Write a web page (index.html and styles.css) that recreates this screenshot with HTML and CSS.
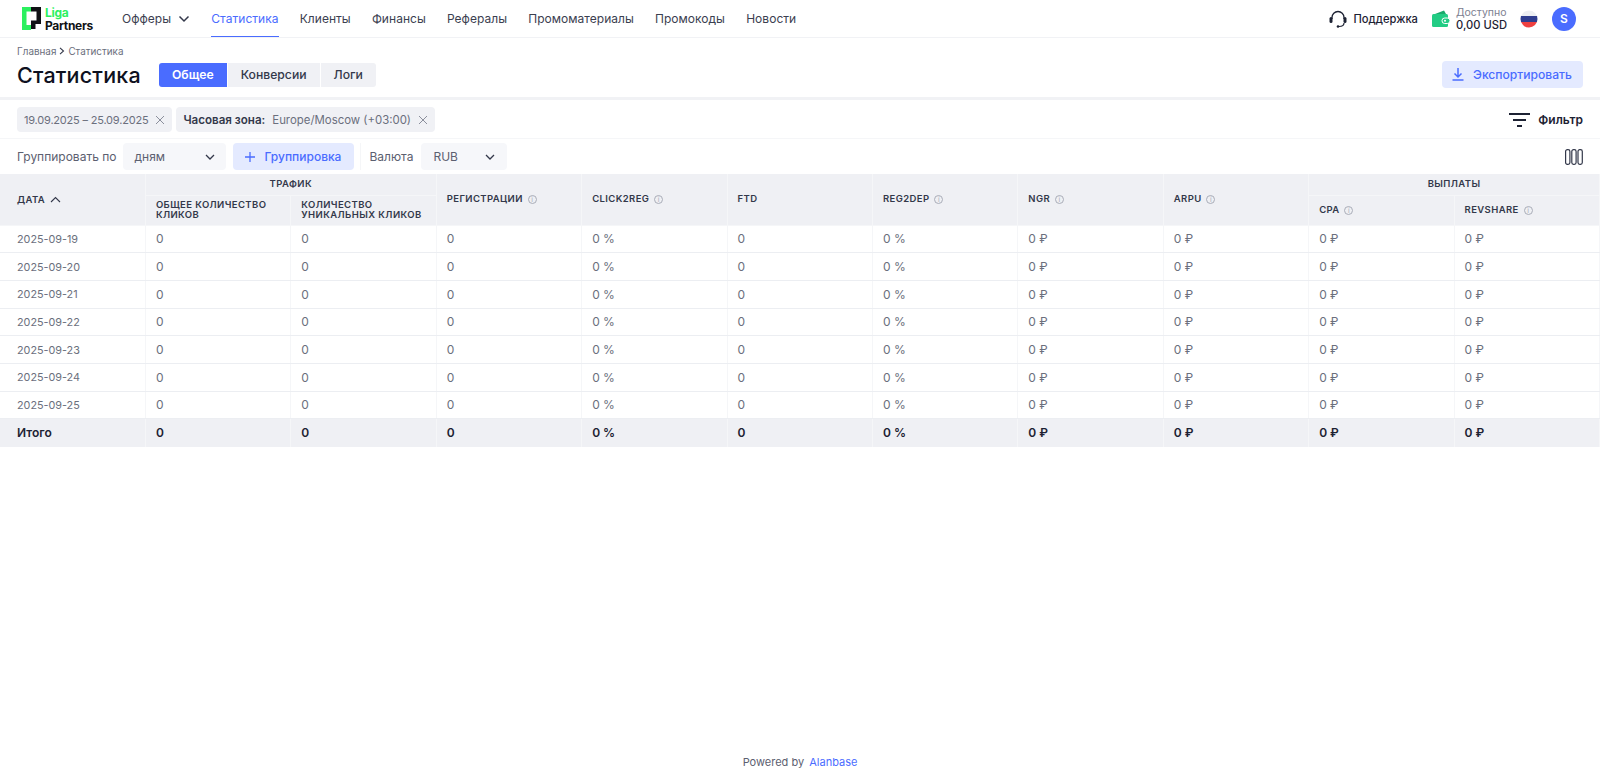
FILE: index.html
```html
<!DOCTYPE html>
<html lang="ru">
<head>
<meta charset="utf-8">
<title>Статистика</title>
<link rel="stylesheet" href="styles.css">
</head>
<body>
<div class="page">
  <header class="nav">
    <div class="logo">
      <svg class="logo-mark" width="19" height="23" viewBox="0 0 19 23"><path fill="#2bf05f" d="M0 0h9v4.500H4.500V18H9v5H0z"/><path fill="#101216" d="M9 0H19V17H13.500v5H9V13.500h5.500V4.500H9z"/></svg>
      <div class="logo-text"><span class="logo-top">Liga</span><span class="logo-bottom">Partners</span></div>
    </div>
    <nav class="menu">
      <a class="menu-item">Офферы <svg class="chev" width="12" height="8" viewBox="0 0 12 8"><path d="M1.500 1.500 6 6l4.500-4.500" fill="none" stroke="#33384a" stroke-width="1.500"/></svg></a>
      <a class="menu-item active">Статистика</a>
      <a class="menu-item">Клиенты</a>
      <a class="menu-item">Финансы</a>
      <a class="menu-item">Рефералы</a>
      <a class="menu-item">Промоматериалы</a>
      <a class="menu-item">Промокоды</a>
      <a class="menu-item">Новости</a>
    </nav>
    <div class="nav-right">
      <div class="support">
        <svg width="18" height="18" viewBox="0 0 18 18"><path d="M3 9V7.500a6 6 0 0 1 12 0V9" fill="none" stroke="#1d2233" stroke-width="1.300"/><rect x="0.500" y="7" width="3" height="6" rx="1.500" fill="#1d2233"/><rect x="14.500" y="7" width="3" height="6" rx="1.500" fill="#1d2233"/><path d="M15 13c0 2.500-2 3.500-5 3.500" fill="none" stroke="#1d2233" stroke-width="1.200"/><circle cx="9" cy="16.500" r="1.300" fill="#1d2233"/></svg>
        <span>Поддержка</span>
      </div>
      <div class="balance">
        <svg width="18" height="18" viewBox="0 0 18 18"><path d="M3 4 12 0.500 14 4z" fill="#1aa96c"/><rect x="0" y="4" width="16" height="13" rx="1.500" fill="#22cc84"/><rect x="10" y="8" width="8" height="5.500" rx="2.700" fill="#22cc84" stroke="#fff"/><circle cx="13" cy="10.700" r="1" fill="#fff"/></svg>
        <div class="balance-text"><span class="balance-label">Доступно</span><span class="balance-value">0,00 USD</span></div>
      </div>
      <svg class="flag" width="18" height="18" viewBox="0 0 18 18"><defs><clipPath id="fc"><circle cx="9" cy="9" r="8.500"/></clipPath></defs><g clip-path="url(#fc)"><rect width="18" height="6" fill="#eceef2"/><rect y="6" width="18" height="6" fill="#2f3d8f"/><rect y="12" width="18" height="6" fill="#ee4040"/></g></svg>
      <div class="avatar">S</div>
    </div>
  </header>

  <section class="head">
    <div class="crumbs"><span>Главная</span><svg width="6" height="8" viewBox="0 0 6 8"><path d="M1 .8 4.500 4 1 7.200" fill="none" stroke="#33384a" stroke-width="1.100"/></svg><span>Статистика</span></div>
    <div class="head-row">
      <h1 class="title">Статистика</h1>
      <div class="tabs">
        <button class="tab tab-on">Общее</button>
        <button class="tab">Конверсии</button>
        <button class="tab">Логи</button>
      </div>
      <button class="export">
        <svg width="12" height="13" viewBox="0 0 12 13"><path d="M6 0v8.500M2.500 5.500 6 9l3.500-3.500M.5 12h11" fill="none" stroke="#4a6cff" stroke-width="1.500"/></svg>
        Экспортировать
      </button>
    </div>
  </section>

  <section class="chips-row">
    <div class="chip"><span class="chip-date">19.09.2025 – 25.09.2025</span><svg class="x" width="10" height="10" viewBox="0 0 10 10"><path d="m1 1 8 8M9 1 1 9" stroke="#8b8f9c" stroke-width="1"/></svg></div>
    <div class="chip"><b>Часовая зона:</b><span class="chip-zone">Europe/Moscow (+03:00)</span><svg class="x" width="10" height="10" viewBox="0 0 10 10"><path d="m1 1 8 8M9 1 1 9" stroke="#8b8f9c" stroke-width="1"/></svg></div>
    <div class="filter">
      <svg width="21" height="14" viewBox="0 0 21 14"><path d="M0 1h21M4 7h13M8 13h5" stroke="#1d2233" stroke-width="2"/></svg>
      <span>Фильтр</span>
    </div>
  </section>

  <section class="group-row">
    <span class="label">Группировать по</span>
    <div class="select sel-days"><span>дням</span><svg width="10" height="6" viewBox="0 0 10 6"><path d="m1 1 4 4 4-4" fill="none" stroke="#33384a" stroke-width="1.300"/></svg></div>
    <button class="add"><svg width="10" height="10" viewBox="0 0 10 10"><path d="M5 0v10M0 5h10" stroke="#4a6cff" stroke-width="1.300"/></svg>Группировка</button>
    <span class="sep"></span>
    <span class="label">Валюта</span>
    <div class="select sel-cur"><span>RUB</span><svg width="10" height="6" viewBox="0 0 10 6"><path d="m1 1 4 4 4-4" fill="none" stroke="#33384a" stroke-width="1.300"/></svg></div>
    <svg class="cols" width="18" height="16" viewBox="0 0 18 16"><rect x=".6" y=".6" width="4.300" height="14.800" rx="1.800" fill="none" stroke="#33384a" stroke-width="1.200"/><rect x="6.800" y=".6" width="4.300" height="14.800" rx="1.800" fill="none" stroke="#33384a" stroke-width="1.200"/><rect x="13" y=".6" width="4.300" height="14.800" rx="1.800" fill="none" stroke="#33384a" stroke-width="1.200"/></svg>
  </section>

  <table class="stats">
    <thead>
      <tr class="hr1">
        <th rowspan="2" class="first">ДАТА <svg class="sort" width="11" height="7" viewBox="0 0 11 7"><path d="m1 6 4.500-4.500L10 6" fill="none" stroke="#33384a" stroke-width="1.100"/></svg></th>
        <th colspan="2" class="center">ТРАФИК</th>
        <th rowspan="2">РЕГИСТРАЦИИ <i class="info">i</i></th>
        <th rowspan="2">CLICK2REG <i class="info">i</i></th>
        <th rowspan="2">FTD</th>
        <th rowspan="2">REG2DEP <i class="info">i</i></th>
        <th rowspan="2">NGR <i class="info">i</i></th>
        <th rowspan="2">ARPU <i class="info">i</i></th>
        <th colspan="2" class="center">ВЫПЛАТЫ</th>
      </tr>
      <tr class="hr2">
        <th>ОБЩЕЕ КОЛИЧЕСТВО КЛИКОВ</th>
        <th>КОЛИЧЕСТВО УНИКАЛЬНЫХ КЛИКОВ</th>
        <th>CPA <i class="info">i</i></th>
        <th>REVSHARE <i class="info">i</i></th>
      </tr>
    </thead>
    <tbody>
      <tr><td class="first">2025-09-19</td><td>0</td><td>0</td><td>0</td><td>0 %</td><td>0</td><td>0 %</td><td>0 ₽</td><td>0 ₽</td><td>0 ₽</td><td>0 ₽</td></tr>
      <tr><td class="first">2025-09-20</td><td>0</td><td>0</td><td>0</td><td>0 %</td><td>0</td><td>0 %</td><td>0 ₽</td><td>0 ₽</td><td>0 ₽</td><td>0 ₽</td></tr>
      <tr><td class="first">2025-09-21</td><td>0</td><td>0</td><td>0</td><td>0 %</td><td>0</td><td>0 %</td><td>0 ₽</td><td>0 ₽</td><td>0 ₽</td><td>0 ₽</td></tr>
      <tr><td class="first">2025-09-22</td><td>0</td><td>0</td><td>0</td><td>0 %</td><td>0</td><td>0 %</td><td>0 ₽</td><td>0 ₽</td><td>0 ₽</td><td>0 ₽</td></tr>
      <tr><td class="first">2025-09-23</td><td>0</td><td>0</td><td>0</td><td>0 %</td><td>0</td><td>0 %</td><td>0 ₽</td><td>0 ₽</td><td>0 ₽</td><td>0 ₽</td></tr>
      <tr><td class="first">2025-09-24</td><td>0</td><td>0</td><td>0</td><td>0 %</td><td>0</td><td>0 %</td><td>0 ₽</td><td>0 ₽</td><td>0 ₽</td><td>0 ₽</td></tr>
      <tr><td class="first">2025-09-25</td><td>0</td><td>0</td><td>0</td><td>0 %</td><td>0</td><td>0 %</td><td>0 ₽</td><td>0 ₽</td><td>0 ₽</td><td>0 ₽</td></tr>
    </tbody>
    <tfoot>
      <tr><td class="first">Итого</td><td>0</td><td>0</td><td>0</td><td>0 %</td><td>0</td><td>0 %</td><td>0 ₽</td><td>0 ₽</td><td>0 ₽</td><td>0 ₽</td></tr>
    </tfoot>
  </table>

  <footer class="foot">Powered by <a class="foot-link">Alanbase</a></footer>
</div>
</body>
</html>
```

FILE: styles.css
```css
* { box-sizing: border-box; }
html, body { margin: 0; padding: 0; }
body {
  font-family: "Inter", "Open Sans", "Liberation Sans", sans-serif;
  color: #33384a;
  background: #fff;
  font-size: 12px;
}
button { font-family: inherit; border: 0; }
.page { height: 774px; display: flex; flex-direction: column; overflow: hidden; }

.nav {
  height: 38px;
  flex: none;
  display: flex;
  align-items: stretch;
  padding: 0 24px 0 22px;
  border-bottom: 1px solid #f1f2f5;
}
.logo { display: flex; align-items: center; gap: 4px; width: 100px; }
.logo-mark { flex: none; }
.logo-text { display: flex; flex-direction: column; font-weight: 700; font-size: 12px; line-height: 13px; letter-spacing: -.3px; }
.logo-top { color: #2bf05f; }
.logo-bottom { color: #101216; }
.menu { display: flex; gap: 21.200px; }
.menu-item {
  display: flex;
  align-items: center;
  gap: 5px;
  height: 37px;
  letter-spacing: .03px;
  color: #3b4050;
}
.menu-item.active { color: #4a6cff; border-bottom: 1px solid #4a6cff; }
.chev { margin-left: 2px; }
.nav-right { margin-left: auto; display: flex; align-items: center; }
.support { display: flex; align-items: center; gap: 6px; font-size: 11.200px; font-weight: 500; color: #1d2233; margin-right: 14px; }
.balance { display: flex; align-items: center; gap: 6px; margin-right: 13px; }
.balance-text { display: flex; flex-direction: column; line-height: 12px; }
.balance-label { font-size: 10.500px; color: #7c8090; }
.balance-value { font-size: 11.200px; font-weight: 500; color: #1d2233; }
.flag { margin-right: 14px; }
.avatar {
  width: 24px; height: 24px; border-radius: 50%;
  background: #4a6cff; color: #fff;
  display: flex; align-items: center; justify-content: center;
  font-size: 12px; font-weight: 600;
}

.head {
  flex: none;
  height: 62px;
  padding: 7px 17px 0;
  border-bottom: 3px solid #f1f2f5;
}
.crumbs { display: flex; align-items: center; gap: 3px; font-size: 9.900px; line-height: 12px; color: #6b6f7d; }
.head-row { display: flex; align-items: center; margin-top: 4px; height: 27px; }
.title { margin: 0 17px 0 0; font-size: 21.500px; font-weight: 500; color: #0e1120; width: 125px; letter-spacing: .2px; white-space: nowrap; }
.tabs { display: flex; gap: 1px; }
.tab {
  height: 24px;
  padding: 0 13px;
  background: #f0f1f5;
  font-size: 12.200px;
  font-weight: 500;
  color: #33384a;
}
.tab:first-child { border-radius: 3px 0 0 3px; }
.tab:last-child { border-radius: 0 3px 3px 0; }
.tab-on { background: #4a6cff; color: #fff; font-weight: 600; }
.export {
  margin-left: auto;
  height: 27px;
  width: 141px;
  padding-left: 5px;
  display: flex;
  align-items: center;
  justify-content: center;
  gap: 9px;
  border-radius: 4px;
  background: #e4eaff;
  color: #4a6cff;
  font-size: 12.100px;
  font-weight: 500;
}

.chips-row {
  flex: none;
  height: 39px;
  padding: 7px 17px 0;
  display: flex;
  gap: 4px;
  align-items: flex-start;
  border-bottom: 1px solid #f5f6f8;
}
.chip {
  height: 25px;
  display: flex;
  align-items: center;
  gap: 7px;
  padding: 0 7px;
  background: #f0f1f5;
  border-radius: 4px;
  font-size: 11.400px;
  color: #6b6f7d;
}
.chip-date { font-size: 11px; letter-spacing: -.2px; }
.chip b { font-weight: 600; font-size: 11.600px; color: #33384a; }
.filter { margin-left: auto; height: 25px; display: flex; align-items: center; gap: 8px; font-size: 12px; font-weight: 600; color: #1d2233; }

.group-row {
  flex: none;
  height: 35px;
  padding: 4px 17px 0;
  display: flex;
  align-items: flex-start;
}
.label { height: 27px; line-height: 27px; font-size: 12px; color: #5c6070; }
.select {
  height: 27px;
  display: flex;
  align-items: center;
  justify-content: space-between;
  background: #f6f7fa;
  border-radius: 4px;
  font-size: 12px;
  color: #5c6070;
}
.sel-days { width: 103px; margin-left: 6px; padding: 0 11px 0 12px; }
.sel-cur { width: 86px; margin-left: 8px; padding: 0 12px 0 12px; }
.add {
  height: 27px;
  width: 121px;
  margin-left: 7px;
  display: flex;
  align-items: center;
  justify-content: center;
  gap: 10px;
  border-radius: 4px;
  background: #e4eaff;
  color: #4a6cff;
  font-size: 12px;
  font-weight: 500;
}
.sep { width: 1px; height: 27px; margin: 0 9px 0 6px; background: #f5f6f8; }
.cols { margin-left: auto; margin-top: 6px; }

.stats {
  flex: none;
  width: 100%;
  table-layout: fixed;
  border-collapse: collapse;
  font-size: 12px;
}
.stats th {
  background: #eff0f4;
  border: 1px solid #f5f6f8;
  border-width: 0 1px 1px 0;
  padding: 0 10px;
  text-align: left;
  font-size: 9.500px;
  line-height: 10px;
  font-weight: 600;
  color: #33384a;
  letter-spacing: .4px;
}
.stats th.first, .stats td.first { padding-left: 17px; }
.stats th.first { padding-top: 2px; }
.sort { margin-left: 2px; }
.stats th.center { text-align: center; }
.hr1 { height: 21px; }
.hr2 { height: 30px; }
.stats td {
  height: 27.700px;
  padding: 0 10px;
  border-right: 1px solid #f5f6f8;
  border-bottom: 1px solid #eceef2;
  color: #6b6f7d;
  white-space: nowrap;
}
.stats td.first { font-size: 10.800px; padding-top: 1px; }
.stats tfoot td {
  background: #eff0f4;
  color: #1d2233;
  font-weight: 600;
  height: 28px;
  padding-bottom: 1px;
  border-bottom: 0;
}
.stats tfoot td.first { font-size: 12px; padding-top: 0; }
.info {
  display: inline-block;
  width: 9px;
  height: 9px;
  margin-left: 2px;
  border: 1px solid #a9adb8;
  border-radius: 50%;
  font-size: 7px;
  line-height: 7px;
  font-weight: 400;
  font-style: normal;
  text-align: center;
  color: #a9adb8;
  letter-spacing: 0;
}

.foot {
  margin-top: auto;
  height: 19px;
  text-align: center;
  font-size: 11px;
  color: #5c6070;
  flex: none;
}
.foot-link { color: #4a6cff; margin-left: 2px; }
```
